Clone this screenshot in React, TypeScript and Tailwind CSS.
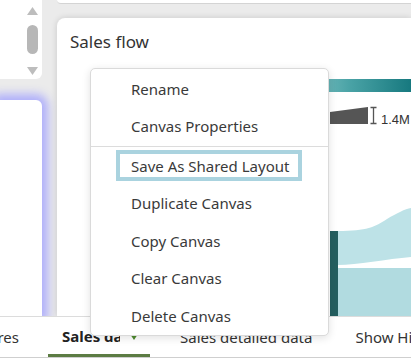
import React from 'react'

// ── Context menu ──────────────────────────────────────────────────────────────

const topItems = ['Rename', 'Canvas Properties']
const bottomItems = ['Duplicate Canvas', 'Copy Canvas', 'Clear Canvas', 'Delete Canvas']

function MenuItem({ label }: { label: string }) {
  return (
    <li className="h-[37.5px] flex items-center pl-[40px] text-[15px] text-[#3a3a3a] whitespace-nowrap">
      {label}
    </li>
  )
}

function CanvasMenu() {
  return (
    <div className="absolute left-[90px] top-[68px] w-[239px] z-10 rounded-[5px] border border-[#dadada] bg-white shadow-[0_2px_8px_rgba(0,0,0,0.12)] pt-[1px] pb-0">
      <ul>
        {topItems.map((l) => (
          <MenuItem key={l} label={l} />
        ))}
      </ul>
      <div className="h-px bg-[#dcdcdc] mt-[1px]" />
      <div className="h-[37.5px] flex items-center pl-[25px]">
        <div className="h-[31px] w-[186px] border-[4px] border-[#aad3df] flex items-center pl-[11px] text-[15px] text-[#3a3a3a] whitespace-nowrap">
          Save As Shared Layout
        </div>
      </div>
      <ul>
        {bottomItems.map((l) => (
          <MenuItem key={l} label={l} />
        ))}
      </ul>
    </div>
  )
}

// ── Sankey fragment ───────────────────────────────────────────────────────────

function SalesChart() {
  return (
    <svg width="354" height="249" viewBox="0 0 354 249" className="block shrink-0">
      <defs>
        <linearGradient id="teal" x1="0" x2="1" y1="0" y2="0">
          <stop offset="0" stopColor="#bfe6e6" />
          <stop offset="0.6" stopColor="#4aa3a6" />
          <stop offset="1" stopColor="#17797f" />
        </linearGradient>
      </defs>
      <rect x="200" y="12" width="154" height="13" fill="url(#teal)" />
      <polygon points="273,45 311,40 311,57 273,57" fill="#555" />
      <g stroke="#555" strokeWidth="1.3">
        <line x1="316.5" y1="40" x2="316.5" y2="57" />
        <line x1="313.5" y1="40.5" x2="319.5" y2="40.5" />
        <line x1="313.5" y1="56.5" x2="319.5" y2="56.5" />
      </g>
      <text x="324" y="57" fontSize="13" fill="#333" fontFamily="'Liberation Sans', sans-serif">
        1.4M
      </text>
      <path d="M281,164 C310,164 318,160 330,152 C340,146 348,142 354,141 L354,190 C330,192 300,198 281,198 Z" fill="#bde2e7" />
      <rect x="281" y="201" width="73" height="48" fill="#b1dbe0" />
      <rect x="273" y="164" width="8" height="85" fill="#245f60" />
    </svg>
  )
}

// ── Page ──────────────────────────────────────────────────────────────────────

export default function App() {
  return (
    <div className="w-[411px] h-[358px] overflow-hidden relative flex flex-col bg-[#ebebeb] font-['Noto_Sans',sans-serif]">
      <div className="flex-1 flex min-h-0">
        {/* left column */}
        <div className="w-[42px] shrink-0 flex flex-col gap-[21px]">
          <div className="h-[79px] bg-white rounded-br-[6px] flex flex-col items-end pr-[4px] pt-[7px]">
            <svg width="11" height="8" viewBox="0 0 11 8">
              <polygon points="5.5,0 11,8 0,8" fill="#bdbdbd" />
            </svg>
            <div className="mt-[10px] w-[11px] h-[29px] rounded-full bg-[#b7b7b7]" />
            <svg width="11" height="8" viewBox="0 0 11 8" className="mt-[13px]">
              <polygon points="0,0 11,0 5.5,8" fill="#bdbdbd" />
            </svg>
          </div>
          <div className="flex-1 bg-white rounded-tr-[6px] shadow-[0_0_10px_6px_rgba(160,160,255,0.8)]" />
        </div>

        {/* right column */}
        <div className="ml-[15px] flex-1 flex flex-col">
          <div className="h-[4px] bg-white border-b border-[#d4d4d4] rounded-bl-[4px]" />
          <div className="mt-[14px] flex-1 bg-white rounded-tl-[8px] shadow-[0_0_6px_rgba(0,0,0,0.15)] flex flex-col overflow-hidden">
            <div className="h-[49px] shrink-0 pl-[13px] pt-[12px] text-[17px] text-[#333] leading-[24px]">Sales flow</div>
            <SalesChart />
          </div>
        </div>
      </div>

      {/* tab bar */}
      <div className="h-[42px] shrink-0 bg-white border-t border-[#dcdcdc] border-b border-b-[#cfcfcf] flex items-stretch text-[15px] text-[#333] whitespace-nowrap">
        <div className="w-[19px] shrink-0 overflow-hidden flex justify-end items-center">
          <span className="shrink-0">Measures</span>
        </div>
        <div className="ml-[29px] w-[102px] shrink-0 pl-[14px] flex items-center border-b-[3px] border-[#5c7c43] pt-[2px]">
          <span className="w-[58px] shrink-0 overflow-hidden font-bold text-[#222]">Sales data</span>
          <svg width="8" height="6" viewBox="0 0 8 6" className="ml-[10px] shrink-0">
            <polygon points="0,0 8,0 4,6" fill="#4e8b2f" />
          </svg>
        </div>
        <div className="ml-[30px] shrink-0 flex items-center">Sales detailed data</div>
        <div className="ml-[43px] shrink-0 flex items-center">Show Hidden</div>
      </div>

      <CanvasMenu />
    </div>
  )
}
